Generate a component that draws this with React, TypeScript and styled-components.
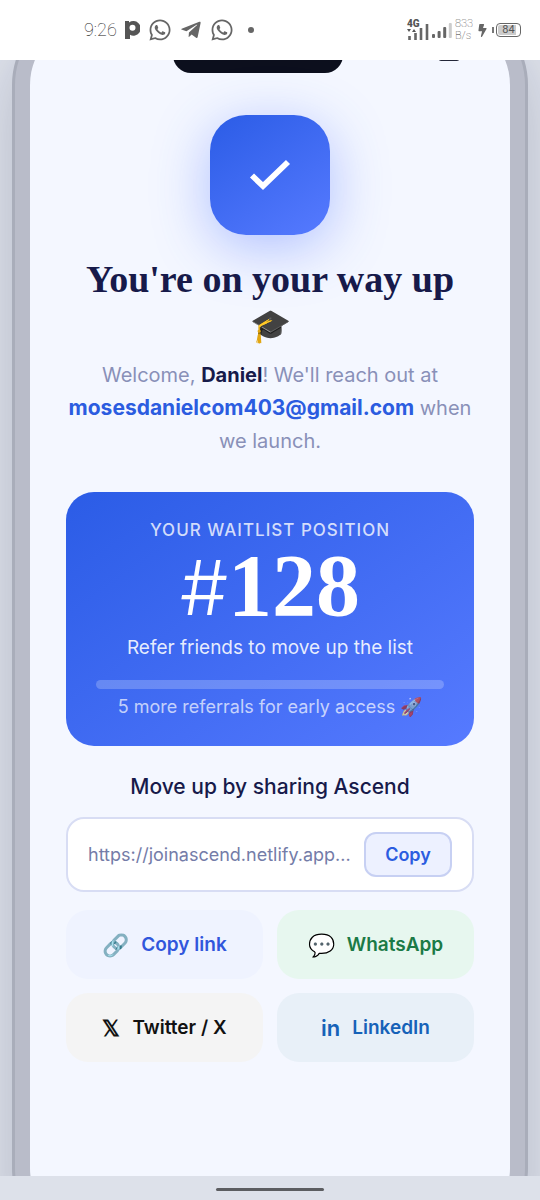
import React from 'react';
import styled, { createGlobalStyle } from 'styled-components';
import { FaBolt, FaTelegramPlane, FaWhatsapp } from 'react-icons/fa';

const sans = `Inter, "Liberation Sans", sans-serif`;
const serif = `"Liberation Serif", serif`;
const narrow = `Roboto, "Liberation Sans", sans-serif`;
const ink = '#171a4a';
const blue = '#2b5ce0';
const brand = 'linear-gradient(145deg, #2b5ce6 0%, #567aff 100%)';

const Global = createGlobalStyle`
  *, *::before, *::after { box-sizing: border-box; }
  body { margin: 0; background: #dde1ea; font-family: ${sans}; color: ${ink}; }
  h1, h2, p { margin: 0; }
  button, input { font: inherit; }
`;

const Page = styled.div`
  display: flex;
  flex-direction: column;
  min-height: 100vh;
`;

const SystemBar = styled.header`
  display: flex;
  align-items: center;
  justify-content: space-between;
  height: 60px;
  padding: 0 19px 0 84px;
  background: #fff;
  color: #666;
  font-family: ${narrow};
`;

const SystemGroup = styled.div<{ $gap: number }>`
  display: flex;
  align-items: center;
  gap: ${(p) => p.$gap}px;
`;

const Clock = styled.time`
  font-size: 18px;
  font-weight: 100;
  line-height: 20px;
  color: #222;
`;

const Dot = styled.span`
  width: 6px;
  height: 6px;
  margin-left: 6px;
  border-radius: 50%;
  background: #666;
`;

const Speed = styled.span`
  display: flex;
  flex-direction: column;
  font-size: 11px;
  font-weight: 100;
  line-height: 12px;
  color: #333;
`;

const Signal = styled.span`
  display: flex;
  flex-direction: column;
  font-size: 10px;
  font-weight: 900;
  line-height: 8px;
  color: #555;
`;

const BatteryShell = styled.span`
  display: flex;
  align-items: center;
  gap: 2px;

  &::before {
    content: '';
    width: 2px;
    height: 6px;
    background: #777;
  }
`;

const BatteryLevel = styled.span`
  width: 25px;
  height: 14px;
  border: 1px solid #666;
  border-radius: 4px;
  background: linear-gradient(90deg, #ccc 84%, #fff 84%) content-box;
  padding: 1px;
  font-size: 11px;
  line-height: 10px;
  text-align: center;
  color: #555;
`;

const Stage = styled.div`
  flex: 1;
  display: flex;
  flex-direction: column;
  overflow: hidden;
`;

const Phone = styled.div`
  flex: 1;
  display: flex;
  margin: -59px 12px -76px;
  padding: 15px;
  border: 3px solid #a9adba;
  border-radius: 84px;
  background: #b9bcc9;
  box-shadow: 0 30px 60px rgba(30, 34, 70, 0.2);
`;

const Screen = styled.main`
  flex: 1;
  min-width: 0;
  border-radius: 66px;
  background: #f4f7ff;
`;

const PhoneStatus = styled.div`
  display: grid;
  grid-template-columns: 1fr 170px 1fr;
  align-items: end;
  height: 54px;
  padding: 0 50px 0 26px;
`;

const Notch = styled.div`
  grid-column: 2;
  height: 36px;
  border-radius: 20px;
  background: #0c0f1d;
`;

const PhoneBattery = styled.div`
  justify-self: end;
  width: 22px;
  height: 12px;
  margin-bottom: 12px;
  border: 1px solid #222638;
  border-radius: 3px;
`;

const Content = styled.div`
  display: flex;
  flex-direction: column;
  padding: 42px 36px 100px;
  text-align: center;
`;

const Success = styled.div`
  display: grid;
  place-items: center;
  align-self: center;
  width: 120px;
  height: 120px;
  border-radius: 36px;
  background: ${brand};
  box-shadow: 0 12px 56px rgba(60, 100, 255, 0.38);
`;

const Title = styled.h1`
  margin-top: 22px;
  font: 700 38px/45px ${serif};
`;

const TitleEmoji = styled.span`
  font-size: 33px;
  line-height: 36px;
`;

const Intro = styled.p`
  margin-top: 12px;
  font-size: 20px;
  line-height: 33px;
  color: #8990b8;
`;

const Name = styled.strong`
  font-weight: 700;
  color: ${ink};
`;

const Email = styled.strong`
  font-size: 21px;
  font-weight: 700;
  line-height: 24px;
  color: ${blue};
`;

const PositionCard = styled.section`
  margin-top: 34px;
  padding: 26px 30px;
  border-radius: 28px;
  background: ${brand};
  color: #fff;
`;

const Label = styled.p`
  font-size: 17px;
  font-weight: 500;
  line-height: 24px;
  letter-spacing: 1px;
  text-transform: uppercase;
  color: rgba(255, 255, 255, 0.78);
`;

const Position = styled.p`
  display: flex;
  align-items: baseline;
  justify-content: center;
  margin-top: 4px;
  font: 700 88px/80px ${serif};
`;

const Hash = styled.span`
  font: 300 76px/80px ${sans};
`;

const Refer = styled.p`
  margin-top: 7px;
  font-size: 19px;
  line-height: 28px;
  color: rgba(255, 255, 255, 0.88);
`;

const Track = styled.progress`
  display: block;
  appearance: none;
  width: 100%;
  height: 9px;
  margin-top: 18px;
  border: 0;
  border-radius: 5px;
  overflow: hidden;
  background: rgba(255, 255, 255, 0.22);

  &::-webkit-progress-bar { background: transparent; }
  &::-webkit-progress-value { background: #fff; }
`;

const Remaining = styled.p`
  margin-top: 5px;
  font-size: 18px;
  line-height: 26px;
  color: rgba(255, 255, 255, 0.7);
`;

const ShareTitle = styled.h2`
  margin-top: 27px;
  font-size: 21px;
  font-weight: 500;
  line-height: 28px;
`;

const LinkBox = styled.div`
  display: flex;
  align-items: center;
  gap: 12px;
  height: 75px;
  margin-top: 16px;
  padding: 0 20px;
  border: 2px solid #d8ddf4;
  border-radius: 18px;
  background: #fff;
`;

const LinkInput = styled.input`
  flex: 1;
  min-width: 0;
  padding: 0;
  border: 0;
  outline: 0;
  background: transparent;
  font-size: 18px;
  line-height: 26px;
  text-overflow: ellipsis;
  color: #747ca8;
`;

const CopyButton = styled.button`
  width: 88px;
  height: 45px;
  padding: 0;
  border: 2px solid #c7d0f3;
  border-radius: 12px;
  background: #edf1ff;
  font-size: 18px;
  font-weight: 600;
  color: ${blue};
`;

const ShareGrid = styled.div`
  display: grid;
  grid-template-columns: 1fr 1fr;
  gap: 14px;
  margin-top: 18px;
`;

const ShareButton = styled.button<{ $bg: string; $fg: string }>`
  display: flex;
  align-items: center;
  justify-content: center;
  gap: 12px;
  height: 69px;
  padding: 0;
  border: 0;
  border-radius: 22px;
  background: ${(p) => p.$bg};
  color: ${(p) => p.$fg};
  font-size: 19px;
  font-weight: 600;
  white-space: nowrap;
`;

const ShareIcon = styled.span`
  font-size: 22px;
  line-height: 28px;
`;

const HomeBar = styled.footer`
  display: grid;
  place-items: center;
  height: 24px;
  padding-top: 3px;
  background: #dde1ea;

  &::before {
    content: '';
    width: 108px;
    height: 3px;
    border-radius: 2px;
    background: #5c5d61;
  }
`;

const shares = [
  { icon: '🔗', text: 'Copy link', bg: '#eff3ff', fg: '#3156dc' },
  { icon: '💬', text: 'WhatsApp', bg: '#e7f7ef', fg: '#1b7a46' },
  { icon: '𝕏', text: 'Twitter / X', bg: '#f4f4f4', fg: '#111111' },
  { icon: 'in', text: 'LinkedIn', bg: '#e8f0f8', fg: '#1662b8' },
];

const Bars = () => (
  <svg width="20" height="16" viewBox="0 0 20 16" aria-hidden="true">
    {[4, 7, 11, 15].map((h, i) => (
      <rect key={h} x={i * 5.6} y={16 - h} width="3" height={h} rx="1" fill={i === 3 ? '#ccc' : '#666'} />
    ))}
  </svg>
);

export default function App() {
  return (
    <Page>
      <Global />
      <SystemBar>
        <SystemGroup $gap={8}>
          <Clock>9:26</Clock>
          <svg width="15" height="20" viewBox="0 0 15 20" aria-hidden="true">
            <path
              d="M0 1h4v1.500A7.300 7.300 0 1 1 5 14.800V19H0zM7.500 4.800a3 3 0 1 0 0 6 3 3 0 0 0 0-6z"
              fill="#555"
              fillRule="evenodd"
            />
          </svg>
          <SystemGroup $gap={8}>
            <FaWhatsapp size={24} />
            <FaTelegramPlane size={22} />
            <FaWhatsapp size={24} />
            <Dot />
          </SystemGroup>
        </SystemGroup>
        <SystemGroup $gap={3}>
          <Signal>
            4G
            <svg width="22" height="12" viewBox="0 0 22 12" overflow="visible" aria-hidden="true">
              <path d="M0 1h4L2 4zM5 4h4L7 1z" fill="#555" />
              <path d="M2.500 8v4M8.500 5v7M14 0v12M20-4v16" stroke="#666" strokeWidth="2.600" />
            </svg>
          </Signal>
          <Bars />
          <Speed>
            <span>833</span>
            <span>B/s</span>
          </Speed>
          <FaBolt size={13} />
          <BatteryShell>
            <BatteryLevel>84</BatteryLevel>
          </BatteryShell>
        </SystemGroup>
      </SystemBar>

      <Stage>
        <Phone>
          <Screen>
            <PhoneStatus>
              <Notch />
              <PhoneBattery />
            </PhoneStatus>
            <Content>
              <Success>
                <svg width="42" height="34" viewBox="0 0 42 34" fill="none" role="img" aria-label="Success">
                  <path d="M3 17.500 14 28 39 4" stroke="#fff" strokeWidth="5.800" />
                </svg>
              </Success>
              <Title>
                You're on your way up <TitleEmoji>🎓</TitleEmoji>
              </Title>
              <Intro>
                Welcome, <Name>Daniel</Name>! We'll reach out at <Email>mosesdanielcom403@gmail.com</Email> when we
                launch.
              </Intro>

              <PositionCard>
                <Label>Your waitlist position</Label>
                <Position>
                  <Hash>#</Hash>128
                </Position>
                <Refer>Refer friends to move up the list</Refer>
                <Track value={0} max={5} aria-label="Referrals" />
                <Remaining>5 more referrals for early access 🚀</Remaining>
              </PositionCard>

              <ShareTitle>Move up by sharing Ascend</ShareTitle>
              <LinkBox>
                <LinkInput readOnly aria-label="Referral link" value="https://joinascend.netlify.app..." />
                <CopyButton type="button">Copy</CopyButton>
              </LinkBox>
              <ShareGrid>
                {shares.map((s) => (
                  <ShareButton key={s.text} type="button" $bg={s.bg} $fg={s.fg}>
                    <ShareIcon>{s.icon}</ShareIcon>
                    {s.text}
                  </ShareButton>
                ))}
              </ShareGrid>
            </Content>
          </Screen>
        </Phone>
      </Stage>
      <HomeBar />
    </Page>
  );
}
